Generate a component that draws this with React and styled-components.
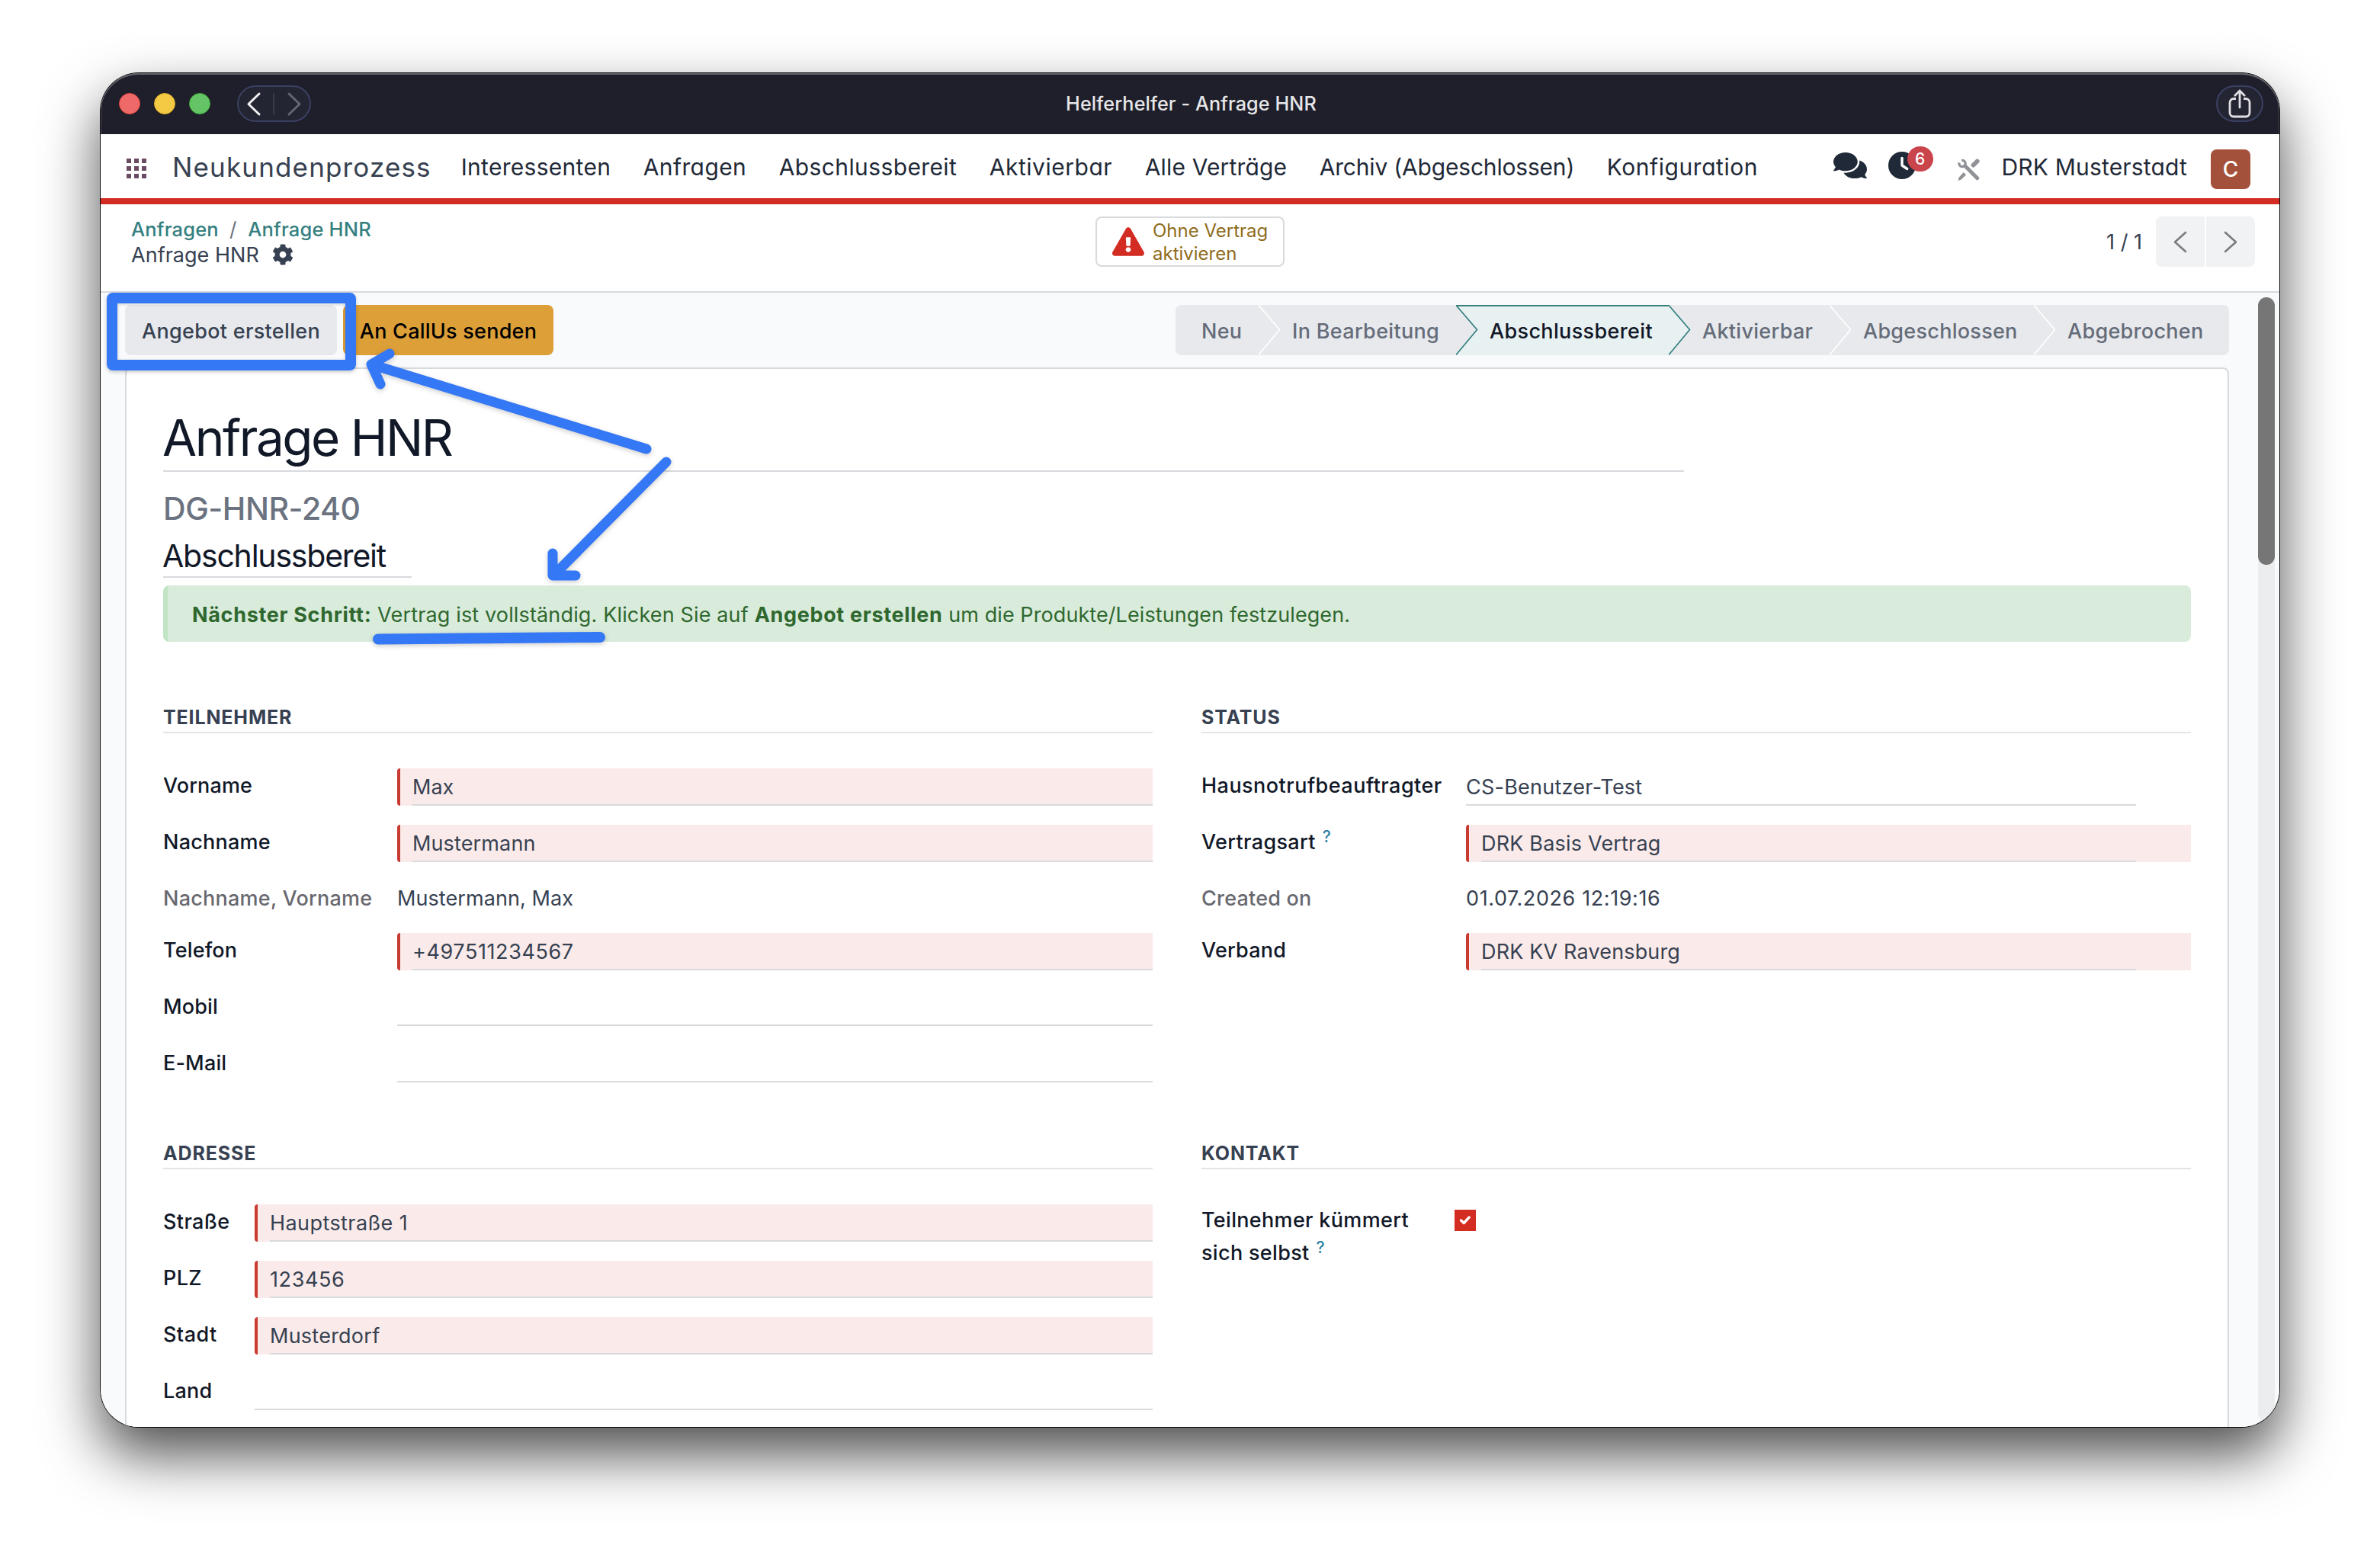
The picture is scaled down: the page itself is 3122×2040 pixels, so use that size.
import React from "react";
import styled, { createGlobalStyle, css } from "styled-components";
import { FaComments, FaCog, FaExclamationTriangle } from "react-icons/fa";
import { FaClock } from "react-icons/fa6";

const c = {
  ink: "#111827",
  text: "#374151",
  muted: "#656c79",
  line: "#d8dadd",
  hair: "#e3e4e6",
  teal: "#35807f",
  red: "#d32c22",
  blue: "#3478f6",
  grey: "#e7e9ed",
};

const GlobalStyle = createGlobalStyle`
  *, *::before, *::after { box-sizing: border-box; }
  body {
    margin: 0;
    background: #fff;
    font-family: Inter, "Liberation Sans", sans-serif;
    color: ${c.text};
  }
`;

/* letter-spacing helper, value in em */
const Txt = styled.span`
  letter-spacing: ${(p) => p.$ls || 0}em;
  white-space: pre;
`;

const Desktop = styled.div`
  width: 3122px;
  height: 2040px;
  padding: 96px 132px 168px;
  overflow: hidden;
`;

const Window = styled.div`
  position: relative;
  width: 2858px;
  height: 1776px;
  display: flex;
  flex-direction: column;
  border-radius: 50px;
  overflow: hidden;
  background: #fff;
  box-shadow: 0 0 0 1px #0a0a0a, 0 36px 76px rgba(0, 0, 0, 0.7);
`;

/* ---------- title bar ---------- */
const TitleBar = styled.header`
  flex: none;
  height: 80px;
  display: grid;
  grid-template-columns: 1fr auto 1fr;
  align-items: center;
  padding: 0 21px 0 24px;
  background: #1e1f2a;
  border-radius: 50px 50px 0 0;
  box-shadow: inset 0 2px 0 #62636c, inset 1px 0 0 #4a4b55, inset -1px 0 0 #4a4b55;
`;
const TitleLeft = styled.div`
  display: flex;
  align-items: center;
`;
const Lights = styled.div`
  display: flex;
  gap: 18px;
  margin-right: 35px;
`;
const Light = styled.span`
  width: 28px;
  height: 28px;
  border-radius: 50%;
  background: ${(p) => p.$color};
  border: 1px solid ${(p) => p.$edge};
`;
const Pill = styled.div`
  width: ${(p) => p.$w}px;
  height: 48px;
  display: flex;
  align-items: center;
  justify-content: center;
  border-radius: 24px;
  border: 2px solid #3b3f61;
  background: #242533;
`;
const WindowTitle = styled(Txt)`
  font-size: 25.2px;
  font-weight: 500;
  color: #e6e6e8;
`;
const TitleRight = styled.div`
  display: flex;
  justify-content: flex-end;
`;

/* ---------- main navigation ---------- */
const NavBar = styled.nav`
  flex: none;
  height: 92px;
  display: flex;
  align-items: center;
  padding: 2px 38px 0 34px;
  border-bottom: 8px solid ${c.red};
  font-feature-settings: "cv11";
  color: #1f2937;
`;
const AppsGrid = styled.div`
  display: grid;
  grid-template-columns: repeat(3, 6px);
  gap: 4px;
  margin: 4px 34px 0 0;
`;
const AppsDot = styled.i`
  height: 6px;
  background: #6d4a63;
`;
const Brand = styled(Txt)`
  font-size: 35px;
  color: #374151;
  margin-right: 39px;
`;
const Menu = styled.div`
  display: flex;
  gap: 42.5px;
`;
const MenuItem = styled(Txt)`
  font-size: 30px;
`;
const Tray = styled.div`
  margin-left: auto;
  display: flex;
  align-items: center;
`;
const TrayIcon = styled.div`
  position: relative;
  display: flex;
  margin: ${(p) => p.$m};
`;
const Badge = styled.span`
  position: absolute;
  left: 25px;
  top: -7px;
  width: 34px;
  height: 33px;
  border-radius: 17px;
  background: #ca444b;
  color: #fff;
  font-size: 21px;
  font-weight: 500;
  line-height: 33px;
  text-align: center;
`;
const Avatar = styled.div`
  width: 52px;
  height: 52px;
  margin: 6px 0 0 31px;
  border-radius: 8px;
  background: #a4513b;
  color: #fff;
  font-size: 28px;
  font-weight: 500;
  line-height: 53px;
  text-align: center;
`;

/* ---------- control panel ---------- */
const ControlPanel = styled.div`
  flex: none;
  height: 116px;
  display: grid;
  grid-template-columns: 1fr auto 1fr;
  align-items: start;
  padding: 16px 32px 0 40px;
  border-bottom: 2px solid ${c.line};
`;
const Crumbs = styled.div`
  display: flex;
  flex-direction: column;
`;
const CrumbRow = styled.div`
  display: flex;
  align-items: center;
  height: ${(p) => p.$h}px;
  font-size: 27px;
  svg {
    margin-left: 17px;
  }
`;
const Crumb = styled(Txt)`
  font-size: 25.5px;
  font-weight: 500;
  color: ${c.teal};
`;
const Slash = styled.span`
  margin: 0 15px 0 14px;
  font-size: 26px;
  color: #6b7280;
`;
const StatButton = styled.div`
  width: 248px;
  height: 66px;
  margin-right: 8px;
  display: flex;
  align-items: center;
  gap: 11px;
  padding-left: 20px;
  border: 2px solid ${c.line};
  border-radius: 8px;
  font-size: 24px;
  line-height: 30px;
  color: #8f6c1c;
`;
const StatLabel = styled.span`
  display: flex;
  flex-direction: column;
  padding-top: 1px;
`;
const Pager = styled.div`
  height: 66px;
  display: flex;
  justify-content: flex-end;
  align-items: center;
  font-size: 27px;
`;
const PagerButtons = styled.div`
  display: flex;
  gap: 2px;
  margin-left: 18px;
`;
const PagerButton = styled.button`
  width: 64px;
  height: 66px;
  padding: 0;
  display: flex;
  align-items: center;
  justify-content: center;
  border: 0;
  background: #f1f2f4;
  border-radius: ${(p) => (p.$side === "left" ? "8px 0 0 8px" : "0 8px 8px 0")};
`;

/* ---------- content ---------- */
const Content = styled.main`
  flex: 1;
  min-height: 0;
  display: flex;
  background: #f9fafc;
`;
const FormView = styled.div`
  width: 2824px;
  padding: 16px 32px 0;
  display: flex;
  flex-direction: column;
`;
const ScrollTrack = styled.div`
  width: 22px;
  height: 1476px;
  margin: 6px 0 0 6px;
  border-radius: 11px;
  background: #ebedef;
`;
const ScrollThumb = styled.div`
  height: 351px;
  border-radius: 11px;
  background: #767676;
`;
const StatusRow = styled.div`
  flex: none;
  height: 82px;
  display: flex;
  align-items: flex-start;
  gap: 8px;
`;
const ActionButton = styled.button`
  width: ${(p) => p.$w}px;
  height: 66px;
  padding: 3px 0 0;
  border: 0;
  border-radius: 8px;
  font: 500 27px Inter, "Liberation Sans", sans-serif;
  background: ${(p) => (p.$accent ? "#dd9f38" : c.grey)};
  color: ${(p) => (p.$accent ? "#000" : c.text)};
`;
const Steps = styled.div`
  margin-left: auto;
  display: grid;
  grid-template-columns: 109px 259px 279px 211px 268px 256px;
  height: 66px;
  border-radius: 8px;
  overflow: hidden;
  background: ${c.grey};
`;
const Step = styled.div`
  position: relative;
  padding-left: ${(p) => (p.$first ? 34 : 44)}px;
  font-size: 27px;
  font-weight: 500;
  line-height: 69px;
  color: ${c.muted};
  ${(p) =>
    p.$active &&
    css`
      color: ${c.ink};
      background: #e8f1f2;
      box-shadow: inset 0 2px 0 ${c.teal}, inset 0 -2px 0 ${c.teal};
    `}
`;
const StepArrow = styled.svg`
  position: absolute;
  left: 0;
  top: 0;
`;
const Sheet = styled.section`
  flex: 1;
  min-height: 0;
  overflow: hidden;
  padding: 50px 48px 0;
  border: 2px solid ${c.line};
  border-bottom: 0;
  border-radius: 8px 8px 0 0;
  background: #fff;
`;
const Title = styled.h1`
  margin: 0;
  width: 1995px;
  height: 85px;
  border-bottom: 2px solid ${c.line};
  font-size: 65.5px;
  font-weight: 400;
  line-height: 82px;
  color: ${c.ink};
  text-indent: -1px;
`;
const Reference = styled.div`
  margin-top: 18px;
  font-size: 41px;
  font-weight: 500;
  line-height: 60px;
  color: #6b7280;
`;
const Stage = styled.div`
  width: 326px;
  height: 61px;
  padding-top: 3px;
  border-bottom: 2px solid ${c.line};
  font-size: 41px;
  line-height: 58px;
  color: ${c.ink};
  text-indent: -1px;
`;
const Alert = styled.div`
  height: 74px;
  margin-top: 10px;
  padding-left: 32px;
  border-left: 6px solid #c1e4c5;
  border-radius: 8px;
  background: #d9ebdb;
  font-size: 27px;
  line-height: 77px;
  white-space: pre;
  color: #2f682f;
`;
const AlertBold = styled.b`
  font-weight: 700;
  letter-spacing: 0.025em;
`;
const Groups = styled.div`
  display: grid;
  grid-template-columns: 1298px 1298px;
  column-gap: 64px;
  row-gap: 72px;
  margin-top: 78px;
`;
const Group = styled.div`
  display: flex;
  flex-direction: column;
`;
const GroupTitle = styled.h2`
  margin: 0 0 46px;
  height: 42px;
  border-bottom: 2px solid ${c.hair};
  font-size: 25px;
  font-weight: 700;
  line-height: 42px;
  letter-spacing: 0.034em;
  color: ${c.text};
`;
const Fields = styled.div`
  display: flex;
  flex-direction: column;
  gap: 26px;
`;
const Row = styled.div`
  display: grid;
  grid-template-columns: ${(p) => p.$label}px 1fr;
  height: ${(p) => (p.$kind === "readonly" ? 42 : 48)}px;
`;
const Label = styled.label`
  font-size: 27px;
  font-weight: 500;
  line-height: ${(p) => (p.$multi ? 42.5 : 45)}px;
  letter-spacing: ${(p) => p.$ls}em;
  white-space: nowrap;
  color: ${(p) => (p.$muted ? "#68686f" : c.ink)};
`;
const Help = styled.span`
  position: relative;
  top: -9px;
  margin-left: 9px;
  font-size: 21px;
  line-height: 1;
  color: #2e7fa3;
`;
const FieldBox = styled.div`
  padding-right: ${(p) => (p.$inset ? 72 : 0)}px;
  ${(p) =>
    p.$required &&
    css`
      padding-left: 16px;
      border-left: 4px solid #c93a30;
      border-radius: 4px 0 0 4px;
      background: #faebea;
    `}
`;
const Value = styled.div`
  height: 100%;
  padding-top: ${(p) => (p.$line ? 2 : 0)}px;
  border-bottom: ${(p) => (p.$line ? `2px solid ${c.line}` : 0)};
  font-size: 27px;
  line-height: 45px;
  letter-spacing: ${(p) => p.$ls}em;
  white-space: nowrap;
`;
const Checkbox = styled.span`
  width: 28px;
  height: 28px;
  margin-top: 7px;
  display: flex;
  align-items: center;
  justify-content: center;
  background: ${c.red};
`;

/* ---------- annotations drawn over the window ---------- */
const HighlightFrame = styled.div`
  position: absolute;
  left: 8px;
  top: 288px;
  width: 327px;
  height: 102px;
  border: 14px solid ${c.blue};
  border-radius: 8px;
  box-shadow: 0 2px 5px rgba(0, 0, 0, 0.22), inset 0 1px 4px rgba(0, 0, 0, 0.2);
`;
const Scribbles = styled.svg`
  position: absolute;
  left: 0;
  top: 0;
  pointer-events: none;
  filter: drop-shadow(0 2px 3px rgba(0, 0, 0, 0.2));
`;

const Chevron = ({ dir, w, h, color, sw }) => (
  <svg width={w + 4} height={h + 4} viewBox={`-2 -2 ${w + 4} ${h + 4}`} fill="none">
    <path
      d={dir === "left" ? `M${w - 1} 1L1 ${h / 2}L${w - 1} ${h - 1}` : `M1 1L${w - 1} ${h / 2}L1 ${h - 1}`}
      stroke={color}
      strokeWidth={sw}
      strokeLinecap="round"
      strokeLinejoin="round"
    />
  </svg>
);

const NavDivider = styled.i`
  width: 2px;
  height: 28px;
  margin: 0 16px 0 15px;
  background: #3a3b49;
`;

const ShareIcon = () => (
  <svg width="30" height="38" viewBox="0 0 30 38" fill="none" stroke="#e0e0e3" strokeWidth="2.8" strokeLinecap="round" strokeLinejoin="round">
    <path d="M10 12.5H7A5 5 0 0 0 2 17.500V31A5 5 0 0 0 7 36H23A5 5 0 0 0 28 31V17.500A5 5 0 0 0 23 12.500H20" strokeLinecap="butt" />
    <path d="M15 24V2M8.800 8.200L15 2L21.200 8.200" />
  </svg>
);

const ToolsIcon = () => (
  <svg width="29" height="29" viewBox="0 0 28 28">
    <g fill="none" stroke="#909297">
      <path d="M9.500 9.500L24.800 24.800" strokeWidth="4.800" strokeLinecap="round" />
      <path d="M5 2.400A4 4 0 1 1 2 5.200" strokeWidth="3.200" />
      <path d="M20 8.200L24.800 3.400" strokeWidth="5.600" strokeLinecap="round" />
    </g>
    <path d="M16.500 8.500L19.700 11.700L22 9.500L18.700 6Z" fill="#909297" />
    <path d="M7.400 17.300L10.700 20.600L4.600 26.600L0.300 28L1.800 23.600Z" fill="#909297" />
  </svg>
);

const CheckIcon = () => (
  <svg width="16" height="14" viewBox="0 0 16 14" fill="none">
    <path d="M2.500 7L6.200 10.500L13.200 3" stroke="#fff" strokeWidth="3.400" strokeLinecap="round" strokeLinejoin="round" />
  </svg>
);

const menu = [
  ["Interessenten", 0.0097],
  ["Anfragen", 0.0133],
  ["Abschlussbereit", 0.0129],
  ["Aktivierbar", 0.0177],
  ["Alle Verträge", 0.0052],
  ["Archiv (Abgeschlossen)", -0.0063],
  ["Konfiguration", 0.0188],
];

const steps = [
  ["Neu", 0.01],
  ["In Bearbeitung", 0.012],
  ["Abschlussbereit", 0.013],
  ["Aktivierbar", 0.011],
  ["Abgeschlossen", 0.01],
  ["Abgebrochen", 0.011],
];
const activeStep = 2;

const groups = [
  {
    title: "TEILNEHMER",
    label: 307,
    rows: [
      { label: "Vorname", ls: 0.004, value: "Max", kind: "required" },
      { label: "Nachname", ls: 0.009, value: "Mustermann", kind: "required", vls: 0.005 },
      { label: "Nachname, Vorname", ls: 0.009, value: "Mustermann, Max", kind: "readonly", vls: 0.003 },
      { label: "Telefon", ls: 0.006, value: "+497511234567", kind: "required", vls: 0.022 },
      { label: "Mobil", ls: 0.006, value: "" },
      { label: "E-Mail", ls: 0.006, value: "" },
    ],
  },
  {
    title: "STATUS",
    label: 347,
    inset: true,
    rows: [
      { label: "Hausnotrufbeauftragter", ls: 0.0175, value: "CS-Benutzer-Test", vls: 0.009 },
      { label: "Vertragsart", ls: 0.013, help: true, value: "DRK Basis Vertrag", kind: "required", vls: 0.007 },
      { label: "Created on", ls: 0.008, value: "01.07.2026 12:19:16", kind: "readonly", vls: 0.022 },
      { label: "Verband", ls: 0.008, value: "DRK KV Ravensburg", kind: "required", vls: 0.006 },
    ],
  },
  {
    title: "ADRESSE",
    label: 120,
    rows: [
      { label: "Straße", ls: 0.014, value: "Hauptstraße 1", kind: "required", vls: 0.0155 },
      { label: "PLZ", ls: 0.012, value: "123456", kind: "required", vls: 0.022 },
      { label: "Stadt", ls: 0.016, value: "Musterdorf", kind: "required", vls: 0.009 },
      { label: "Land", ls: 0.008, value: "" },
    ],
  },
];

const FieldRow = ({ row, labelWidth, inset }) => (
  <Row $label={labelWidth} $kind={row.kind}>
    <Label $ls={row.ls} $muted={row.kind === "readonly"}>
      {row.label}
      {row.help && <Help>?</Help>}
    </Label>
    <FieldBox $required={row.kind === "required"} $inset={inset}>
      <Value $line={row.kind !== "readonly"} $ls={row.vls || 0}>
        {row.value}
      </Value>
    </FieldBox>
  </Row>
);

export default function App() {
  return (
    <Desktop>
      <GlobalStyle />
      <Window>
        <TitleBar>
          <TitleLeft>
            <Lights>
              <Light $color="#ee6a69" $edge="#e0443e" />
              <Light $color="#f4ca44" $edge="#dcae2a" />
              <Light $color="#65c466" $edge="#3faa3c" />
            </Lights>
            <Pill $w={97}>
              <Chevron dir="left" w={16} h={29} color="#f2f2f4" sw={3} />
              <NavDivider />
              <Chevron dir="right" w={16} h={29} color="#656672" sw={3} />
            </Pill>
          </TitleLeft>
          <WindowTitle $ls={0.004}>Helferhelfer - Anfrage HNR</WindowTitle>
          <TitleRight>
            <Pill $w={62}>
              <ShareIcon />
            </Pill>
          </TitleRight>
        </TitleBar>

        <NavBar>
          <AppsGrid>
            {Array.from({ length: 9 }, (_, i) => (
              <AppsDot key={i} />
            ))}
          </AppsGrid>
          <Brand $ls={0.033}>Neukundenprozess</Brand>
          <Menu>
            {menu.map(([label, ls]) => (
              <MenuItem key={label} $ls={ls}>
                {label}
              </MenuItem>
            ))}
          </Menu>
          <Tray>
            <TrayIcon $m="-5px 28px 0 0">
              <FaComments size={44} color="#1f2937" />
            </TrayIcon>
            <TrayIcon $m="-5px 55px 0 0">
              <FaClock size={36} color="#1f2937" />
              <Badge>6</Badge>
            </TrayIcon>
            <TrayIcon $m="6px 29px 0 0">
              <ToolsIcon />
            </TrayIcon>
            <MenuItem $ls={0.0058}>DRK Musterstadt</MenuItem>
            <Avatar>C</Avatar>
          </Tray>
        </NavBar>

        <ControlPanel>
          <Crumbs>
            <CrumbRow $h={33}>
              <Crumb $ls={0.007}>Anfragen</Crumb>
              <Slash>/</Slash>
              <Crumb $ls={0.007}>Anfrage HNR</Crumb>
            </CrumbRow>
            <CrumbRow $h={34}>
              <Txt $ls={0.001}>Anfrage HNR</Txt>
              <FaCog size={28} color={c.text} />
            </CrumbRow>
          </Crumbs>
          <StatButton>
            <FaExclamationTriangle size={42} color={c.red} />
            <StatLabel>
              <Txt>Ohne Vertrag</Txt>
              <Txt>aktivieren</Txt>
            </StatLabel>
          </StatButton>
          <Pager>
            <Txt>1 / 1</Txt>
            <PagerButtons>
              <PagerButton $side="left">
                <Chevron dir="left" w={16} h={27} color="#7b7b7d" sw={2.6} />
              </PagerButton>
              <PagerButton $side="right">
                <Chevron dir="right" w={16} h={27} color="#7b7b7d" sw={2.6} />
              </PagerButton>
            </PagerButtons>
          </Pager>
        </ControlPanel>

        <Content>
          <FormView>
            <StatusRow>
              <ActionButton $w={278}>
                <Txt $ls={0.0115}>Angebot erstellen</Txt>
              </ActionButton>
              <ActionButton $w={276} $accent>
                <Txt $ls={0.009}>An CallUs senden</Txt>
              </ActionButton>
              <Steps>
                {steps.map(([label, ls], i) => {
                  const edge = i === activeStep || i === activeStep + 1;
                  return (
                    <Step key={label} $first={i === 0} $active={i === activeStep}>
                      {i > 0 && (
                        <StepArrow width="29" height="66" viewBox="0 0 29 66">
                          <path
                            d="M0 0L27.500 32.500L0 66Z"
                            fill={i === activeStep + 1 ? "#e8f1f2" : c.grey}
                          />
                          <path
                            d="M0 0.500L27.500 32.500L0 65.500"
                            fill="none"
                            stroke={edge ? c.teal : "#fff"}
                            strokeWidth="1.700"
                          />
                        </StepArrow>
                      )}
                      <Txt $ls={ls}>{label}</Txt>
                    </Step>
                  );
                })}
              </Steps>
            </StatusRow>

            <Sheet>
              <Title>
                <Txt $ls={-0.0375}>Anfrage HNR</Txt>
              </Title>
              <Reference>
                <Txt $ls={-0.011}>DG-HNR-240</Txt>
              </Reference>
              <Stage>
                <Txt $ls={-0.0295}>Abschlussbereit</Txt>
              </Stage>
              <Alert>
                <AlertBold>Nächster Schritt:</AlertBold>
                <Txt $ls={0.0055}> Vertrag ist vollständig. Klicken Sie auf </Txt>
                <AlertBold>Angebot erstellen</AlertBold>
                <Txt $ls={0.003}> um die Produkte/Leistungen festzulegen.</Txt>
              </Alert>

              <Groups>
                {groups.map((g) => (
                  <Group key={g.title}>
                    <GroupTitle>{g.title}</GroupTitle>
                    <Fields>
                      {g.rows.map((row) => (
                        <FieldRow key={row.label} row={row} labelWidth={g.label} inset={g.inset} />
                      ))}
                    </Fields>
                  </Group>
                ))}
                <Group>
                  <GroupTitle>KONTAKT</GroupTitle>
                  <Row $label={332}>
                    <Label $multi $ls={0.012}>
                      Teilnehmer kümmert
                      <br />
                      sich selbst
                      <Help>?</Help>
                    </Label>
                    <Checkbox>
                      <CheckIcon />
                    </Checkbox>
                  </Row>
                </Group>
              </Groups>
            </Sheet>
          </FormView>
          <ScrollTrack>
            <ScrollThumb />
          </ScrollTrack>
        </Content>

        <HighlightFrame />
        <Scribbles
          width="2858"
          height="1776"
          viewBox="132 96 2858 1776"
          fill="none"
          stroke={c.blue}
          strokeWidth="13"
          strokeLinecap="round"
          strokeLinejoin="round"
        >
          <path d="M848 589L487 478M511 464L487 478L499 504" />
          <path d="M874 606L727 754M725 726V755H755" />
          <path d="M496 838.500L787 836" strokeWidth="14" />
        </Scribbles>
      </Window>
    </Desktop>
  );
}
